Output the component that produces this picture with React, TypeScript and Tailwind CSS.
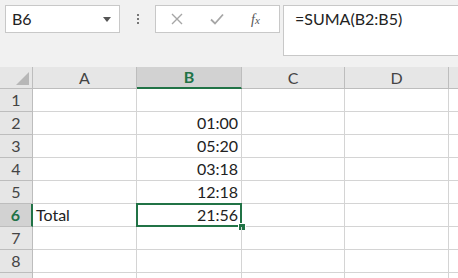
const cols = ["A", "B", "C", "D"];
const rows: [number, string, string][] = [
  [1, "", ""],
  [2, "", "01:00"],
  [3, "", "05:20"],
  [4, "", "03:18"],
  [5, "", "12:18"],
  [6, "Total", "21:56"],
  [7, "", ""],
  [8, "", ""],
  [9, "", ""],
];

export default function App() {
  return (
    <div
      className="w-[458px] h-[278px] overflow-hidden bg-white text-[#222]"
      style={{ fontFamily: "Lato, 'Open Sans', sans-serif" }}
    >
      {/* formula bar */}
      <div className="h-[67px] bg-[#f1f1f1] flex items-start pt-[5px]">
        <div className="ml-[5px] w-[115px] h-[28px] bg-white border border-[#c8c8c8] flex items-center pl-[6px] pr-[8px]">
          <span className="text-[16px] flex-1">B6</span>
          <svg width="8" height="5" viewBox="0 0 8 5">
            <path d="M0 0h8L4 5z" fill="#555" />
          </svg>
        </div>
        <div className="w-[35px] h-[28px] flex flex-col items-center justify-center gap-[2px]">
          <div className="w-[2px] h-[2px] bg-[#777]" />
          <div className="w-[2px] h-[2px] bg-[#777]" />
          <div className="w-[2px] h-[2px] bg-[#777]" />
        </div>
        <div className="w-[125px] h-[28px] bg-white border border-[#c8c8c8] flex items-center">
          <div className="w-[42px] flex justify-center">
            <svg width="12" height="12" viewBox="0 0 12 12">
              <path d="M1 1l10 10M11 1L1 11" stroke="#a6a6a6" strokeWidth="1.4" />
            </svg>
          </div>
          <div className="w-[38px] flex justify-center">
            <svg width="14" height="12" viewBox="0 0 14 12">
              <path d="M1 6.5l4 4L13 1.5" stroke="#a6a6a6" strokeWidth="1.8" fill="none" />
            </svg>
          </div>
          <div className="flex-1 flex justify-center pr-[4px]">
            <span
              className="text-[14px] italic text-[#555]"
              style={{ fontFamily: "'Liberation Serif', serif" }}
            >
              f<span className="text-[11px]">x</span>
            </span>
          </div>
        </div>
        <div className="ml-[3px] flex-1 h-[51px] bg-white border border-[#c8c8c8] border-r-0 pl-[11px] pt-[1px]">
          <span className="text-[16px]">=SUMA(B2:B5)</span>
        </div>
      </div>

      {/* sheet */}
      <div className="grid grid-cols-[33px_104px_105px_103px_104px_1fr] text-[16px]">
        <div className="h-[22px] bg-[#e6e6e6] border-r border-b border-[#bdbdbd] flex items-end justify-end p-[3px]">
          <svg width="13" height="13" viewBox="0 0 13 13">
            <path d="M13 0V13H0z" fill="#b7b7b7" />
          </svg>
        </div>
        {cols.map((c) => (
          <div
            key={c}
            className={
              c === "B"
                ? "h-[22px] bg-[#d2d2d2] border-r border-[#bdbdbd] border-b-2 border-b-[#217346] flex items-center justify-center font-bold text-[#217346]"
                : "h-[22px] bg-[#e6e6e6] border-r border-b border-[#bdbdbd] flex items-center justify-center text-[#444]"
            }
          >
            {c}
          </div>
        ))}
        <div className="h-[22px] bg-[#e6e6e6] border-b border-[#bdbdbd]" />

        {rows.map(([n, a, b]) => (
          <Row key={n} n={n} a={a} b={b} />
        ))}
      </div>
    </div>
  );
}

function Row({ n, a, b }: { n: number; a: string; b: string }) {
  const sel = n === 6;
  return (
    <>
      <div
        className={
          sel
            ? "h-[23px] bg-[#d2d2d2] border-r-2 border-r-[#217346] border-b border-[#bdbdbd] flex items-center justify-center font-bold text-[#217346]"
            : "h-[23px] bg-[#e6e6e6] border-r border-b border-[#bdbdbd] flex items-center justify-center text-[#444]"
        }
      >
        {n < 9 ? n : ""}
      </div>
      <div className="h-[23px] border-r border-b border-[#d4d4d4] flex items-center pl-[3px]">
        {a}
      </div>
      <div className="relative h-[23px] border-r border-b border-[#d4d4d4] flex items-center justify-end pr-[3px]">
        {b}
        {sel && (
          <>
            <div className="absolute -left-px -top-px -right-px -bottom-px border-2 border-[#217346]" />
            <div className="absolute -right-[5px] -bottom-[5px] w-[8px] h-[8px] bg-[#217346] border border-white" />
          </>
        )}
      </div>
      <div className="h-[23px] border-r border-b border-[#d4d4d4]" />
      <div className="h-[23px] border-r border-b border-[#d4d4d4]" />
      <div className="h-[23px] border-b border-[#d4d4d4]" />
    </>
  );
}
